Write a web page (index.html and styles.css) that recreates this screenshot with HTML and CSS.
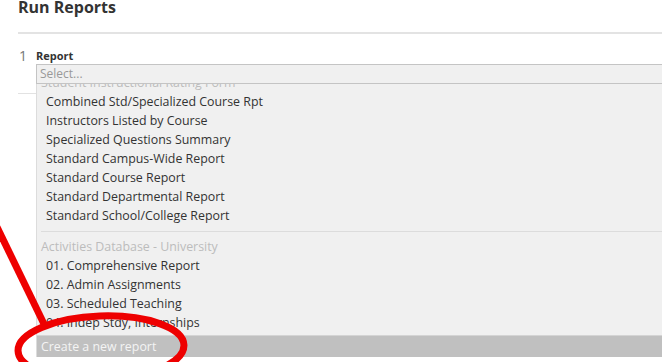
FILE: index.html
```html
<!DOCTYPE html>
<html lang="en">
<head>
  <meta charset="UTF-8">
  <meta name="viewport" content="width=device-width, initial-scale=1.0">
  <title>Run Reports</title>
  <link rel="stylesheet" href="styles.css">
</head>
<body>
  <div class="page">
    <h1 class="title">Run Reports</h1>
    <div class="rule"></div>

    <div class="step">
      <span class="step-num">1</span>
      <div class="field">
        <label class="field-label">Report</label>
        <div class="select-wrap">
          <div class="select">Select...</div>
          <div class="dropdown">
            <div class="dropdown-list">
              <div class="dropdown-scroll">
                <div class="group">
                  <div class="group-title">Student Instructional Rating Form</div>
                  <div class="option">Combined Std/Specialized Course Rpt</div>
                  <div class="option">Instructors Listed by Course</div>
                  <div class="option">Specialized Questions Summary</div>
                  <div class="option">Standard Campus-Wide Report</div>
                  <div class="option">Standard Course Report</div>
                  <div class="option">Standard Departmental Report</div>
                  <div class="option">Standard School/College Report</div>
                </div>
                <div class="group">
                  <div class="group-title">Activities Database - University</div>
                  <div class="option">01. Comprehensive Report</div>
                  <div class="option">02. Admin Assignments</div>
                  <div class="option">03. Scheduled Teaching</div>
                  <div class="option">04. Indep Stdy, Internships</div>
                  <div class="option">05. Advising</div>
                </div>
              </div>
            </div>
            <div class="dropdown-footer">Create a new report</div>
          </div>
        </div>
      </div>
    </div>
  </div>

  <!-- hand-drawn annotation on top of the screenshot -->
  <svg class="markup" width="662" height="362" viewBox="0 0 662 362">
    <line x1="-3" y1="227" x2="44" y2="324" />
    <ellipse cx="101" cy="348" rx="83" ry="32" transform="rotate(-2 101 348)" />
  </svg>
</body>
</html>
```

FILE: styles.css
```css
body {
  margin: 0;
  position: relative;
  width: 662px;
  height: 362px;
  overflow: hidden;
  background: #fff;
  font-family: 'Open Sans', sans-serif;
  color: #333;
}

.page {
  padding-left: 18px;
}

.title {
  margin: 0 0 18px;
  font-size: 16px;
  line-height: 14px;
  font-weight: 700;
  color: #333;
}

.rule {
  height: 2px;
  background: #e3e3e3;
}

.step {
  display: flex;
  padding: 14px 0 9px;
  border-bottom: 1px solid #e2e2e2;
}

.step-num {
  width: 17px;
  padding-left: 1px;
  font-size: 14px;
  line-height: 15px;
  color: #777;
}

.field {
  flex: 1;
  margin-right: -20px;
}

.field-label {
  display: block;
  margin-bottom: 1px;
  font-size: 11px;
  line-height: 15px;
  font-weight: 700;
  color: #333;
}

.select-wrap {
  position: relative;
}

.select {
  height: 18px;
  padding-left: 3px;
  border: 1px solid #c4c4c4;
  background: #f0f0f0;
  font-size: 12px;
  line-height: 18px;
  color: #999;
}

.dropdown {
  position: absolute;
  top: 100%;
  left: 0;
  right: 0;
  background: #f0f0f0;
  border-left: 1px solid #dcdcdc;
}

.dropdown-list {
  height: 251px;
  overflow: hidden;
}

/* list is scrolled a little past the first group title */
.dropdown-scroll {
  margin-top: -16px;
}

.group {
  margin-left: 4px;
  padding: 5px 0 6px;
}

.group + .group {
  border-top: 1px solid #dcdcdc;
}

.group-title {
  font-size: 12.4px;
  line-height: 19px;
  color: #bcbcbc;
}

.option {
  padding-left: 5px;
  font-size: 12.4px;
  line-height: 19px;
  color: #333;
}

.dropdown-footer {
  height: 21px;
  padding-left: 4px;
  border-top: 1px solid #d4d4d4;
  background: #c0c0c0;
  font-size: 12.4px;
  line-height: 21px;
  color: #f4f4f4;
}

.markup {
  position: absolute;
  top: 0;
  left: 0;
  pointer-events: none;
  fill: none;
  stroke: #ee0000;
  stroke-width: 7;
}
```
